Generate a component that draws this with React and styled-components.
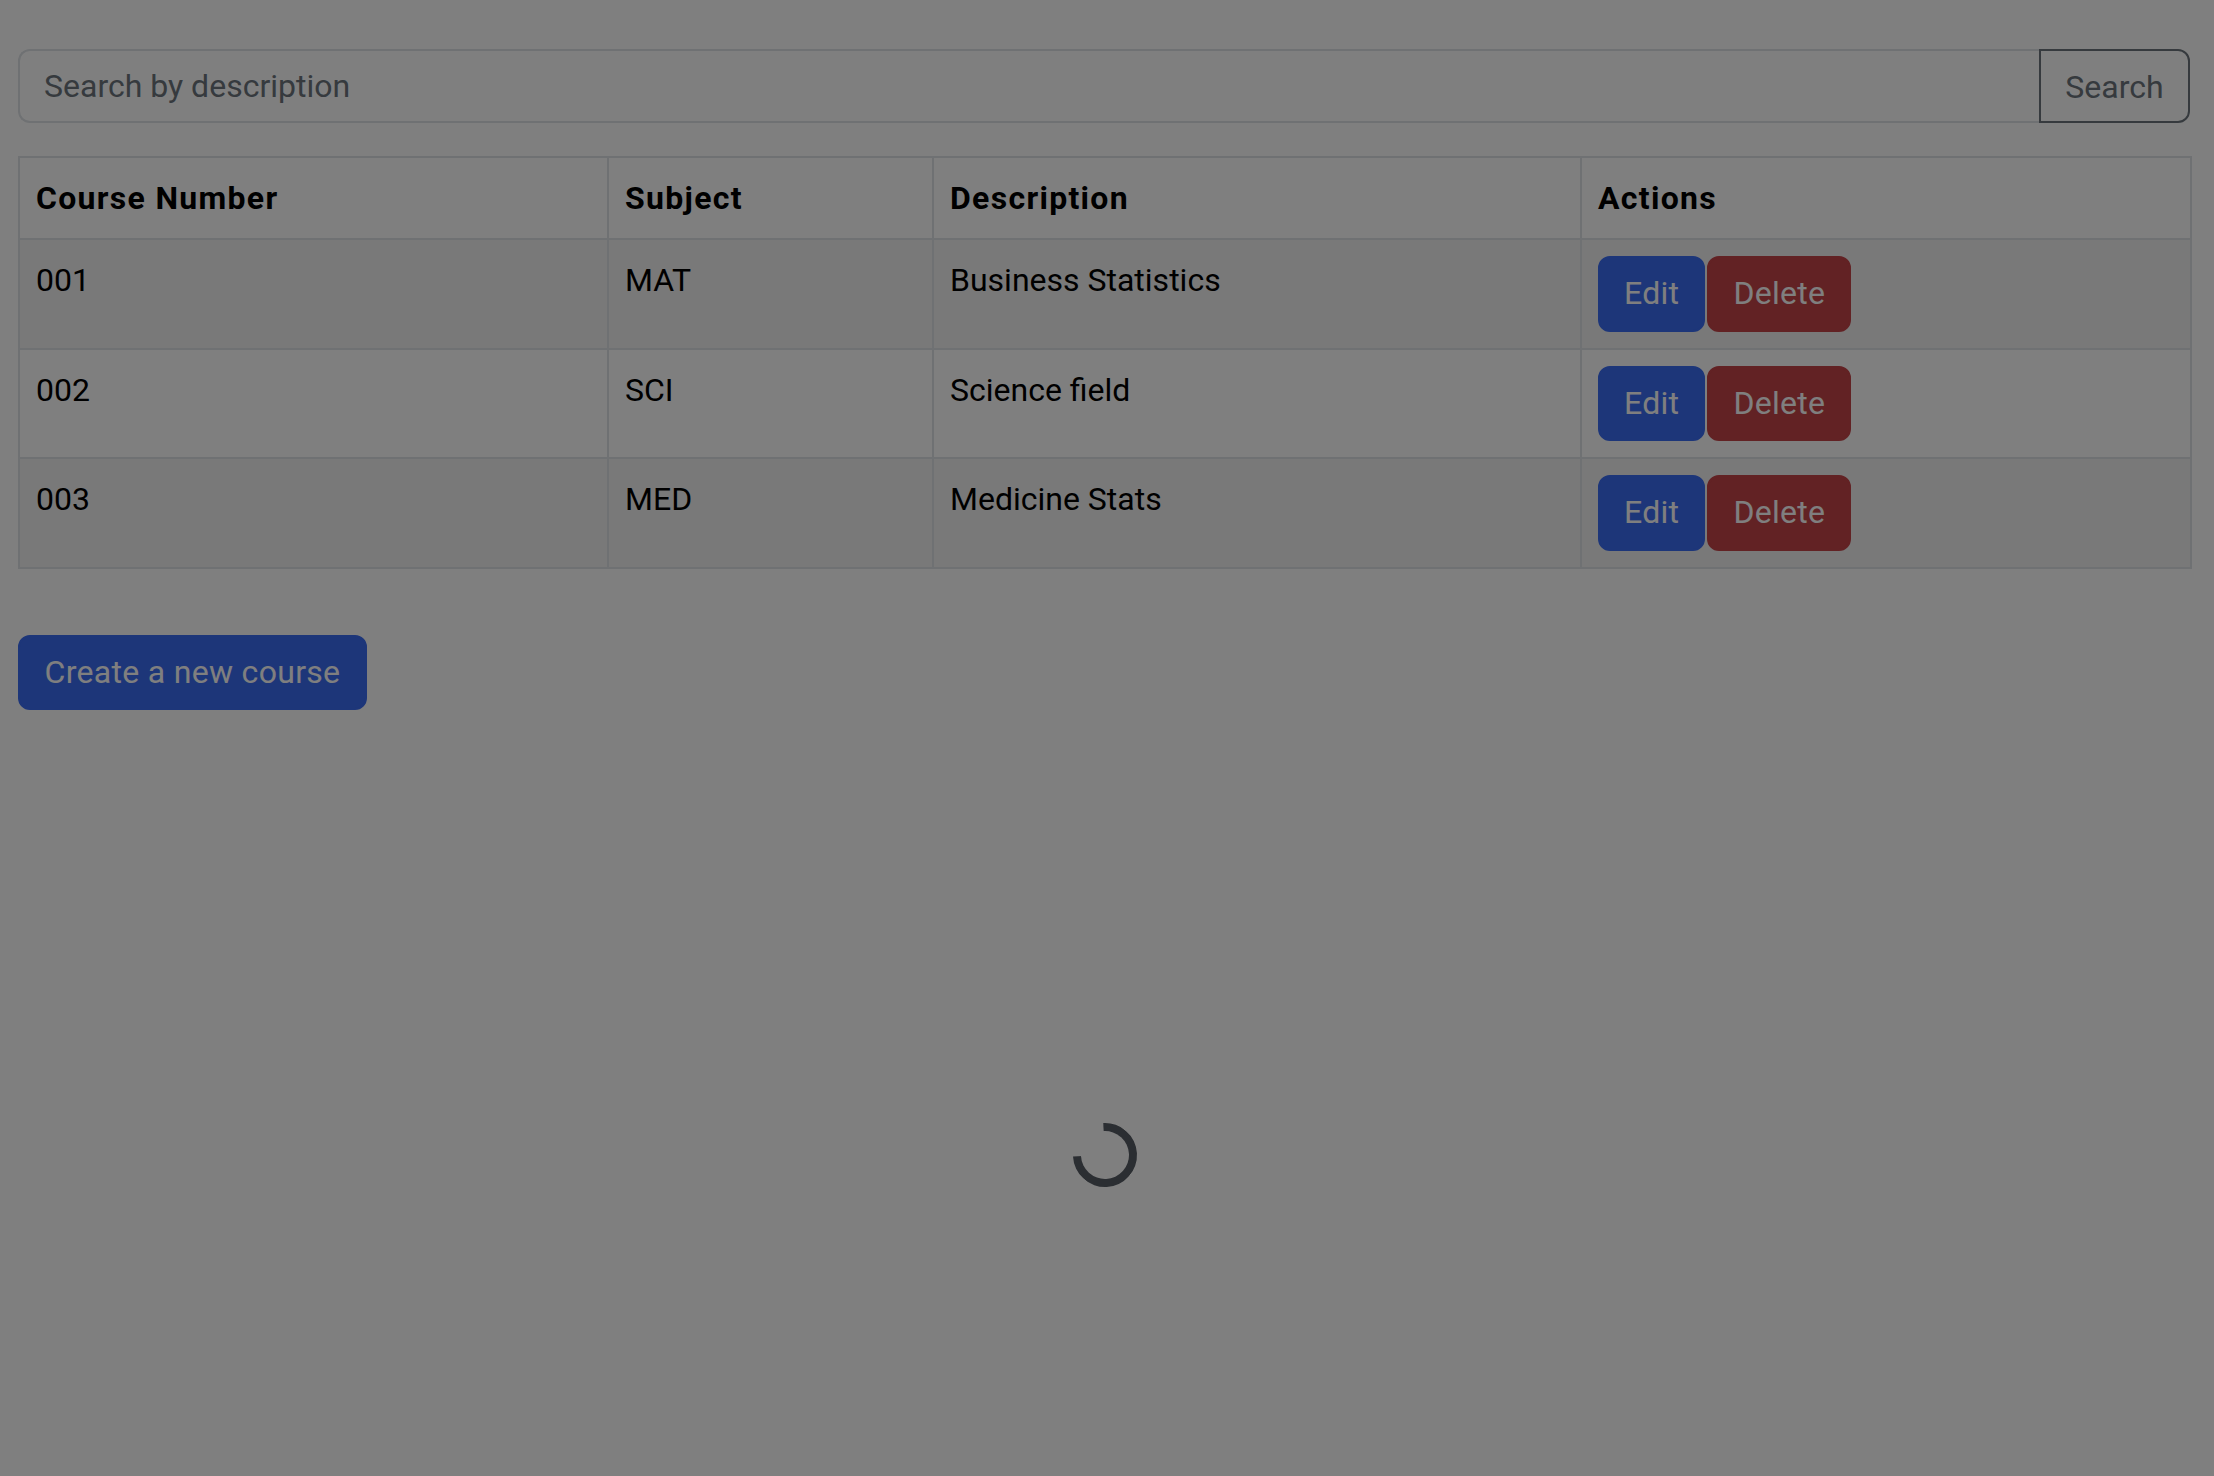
import React from "react";
import styled, { createGlobalStyle, keyframes } from "styled-components";

const Global = createGlobalStyle`
  html, body { margin: 0; padding: 0; background: #ffffff; }
  body {
    font-family: Roboto, "Liberation Sans", Arial, sans-serif;
    color: #000000;
    font-size: 32px;
    line-height: 48px;
  }
  * { box-sizing: border-box; }
`;

const Page = styled.div`
  padding: 49px 24px 0 18px;
  min-height: 1476px;
`;

const SearchGroup = styled.form`
  display: flex;
  width: 100%;
`;

const SearchInput = styled.input`
  flex: 1;
  height: 74px;
  padding: 12px 24px;
  font: inherit;
  color: #212529;
  background: #fff;
  border: 2px solid #dee2e6;
  border-right: none;
  border-radius: 12px 0 0 12px;
  outline: none;
  &::placeholder { color: #6c757d; }
`;

const SearchButton = styled.button`
  width: 151px;
  height: 74px;
  font: inherit;
  color: #6c757d;
  background: transparent;
  border: 2px solid #6c757d;
  border-radius: 0 12px 12px 0;
  padding: 12px 24px;
`;

const Table = styled.table`
  width: 100%;
  margin-top: 33px;
  border-collapse: collapse;
  table-layout: fixed;
  border: 2px solid #dee2e6;
`;

const Th = styled.th`
  width: ${(p) => p.$w}px;
  text-align: left;
  font-weight: 700;
  letter-spacing: 1.3px;
  padding: 16px;
  border: 2px solid #dee2e6;
  vertical-align: top;
`;

const Row = styled.tr`
  background: ${(p) => (p.$striped ? "#f2f2f2" : "#ffffff")};
`;

const Td = styled.td`
  padding: 16px;
  border: 2px solid #dee2e6;
  vertical-align: top;
`;

const Actions = styled.div`
  display: flex;
  gap: 2px;
`;

const Button = styled.button`
  font: inherit;
  line-height: 47.5px;
  letter-spacing: 0.3px;
  padding: 12px 24px;
  border: 2px solid ${(p) => p.$bg};
  background: ${(p) => p.$bg};
  color: #ffffff;
  border-radius: 12px;
  cursor: pointer;
`;

const CreateButton = styled(Button)`
  margin-top: 66px;
  width: 349px;
`;

const Backdrop = styled.div`
  position: fixed;
  inset: 0;
  background: rgba(0, 0, 0, 0.5);
`;

const spin = keyframes`
  from { transform: rotate(222deg); }
  to { transform: rotate(222deg); }
`;

const Spinner = styled.div`
  position: absolute;
  left: 1073px;
  top: 1123px;
  width: 64px;
  height: 64px;
  border: 8px solid #2b2e32;
  border-right-color: transparent;
  border-radius: 50%;
  transform: rotate(222deg);
  animation: ${spin} 1s linear infinite;
`;

const courses = [
  { n: "001", s: "MAT", d: "Business Statistics" },
  { n: "002", s: "SCI", d: "Science field" },
  { n: "003", s: "MED", d: "Medicine Stats" },
];

export default function App() {
  return (
    <>
      <Global />
      <Page>
        <SearchGroup onSubmit={(e) => e.preventDefault()}>
          <SearchInput placeholder="Search by description" />
          <SearchButton type="submit">Search</SearchButton>
        </SearchGroup>
        <Table>
          <thead>
            <tr>
              <Th $w={589}>Course Number</Th>
              <Th $w={325}>Subject</Th>
              <Th $w={648}>Description</Th>
              <Th $w={610}>Actions</Th>
            </tr>
          </thead>
          <tbody>
            {courses.map((c, i) => (
              <Row key={c.n} $striped={i % 2 === 0}>
                <Td>{c.n}</Td>
                <Td>{c.s}</Td>
                <Td>{c.d}</Td>
                <Td>
                  <Actions>
                    <Button $bg="#3a6cf3">Edit</Button>
                    <Button $bg="#c44448">Delete</Button>
                  </Actions>
                </Td>
              </Row>
            ))}
          </tbody>
        </Table>
        <CreateButton $bg="#3a6cf3">Create a new course</CreateButton>
      </Page>
      <Backdrop>
        <Spinner />
      </Backdrop>
    </>
  );
}
